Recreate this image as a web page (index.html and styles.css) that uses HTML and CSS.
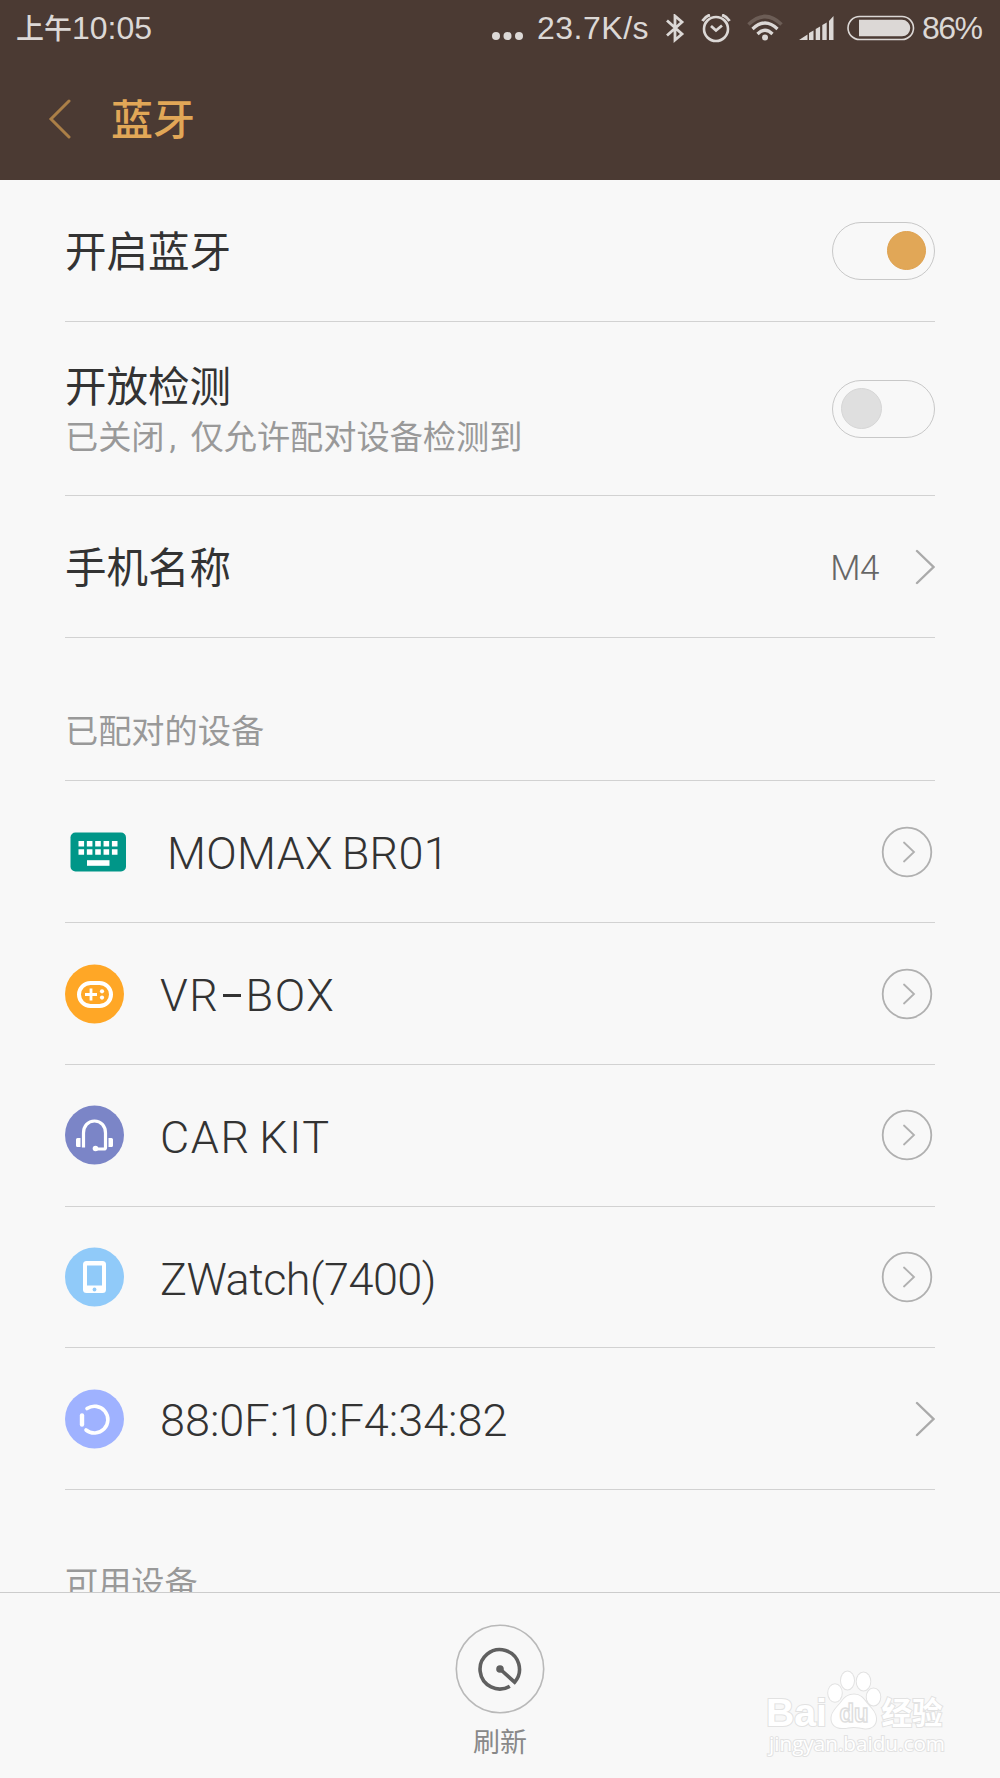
FILE: index.html
```html
<!DOCTYPE html>
<html lang="zh-CN">
<head>
    <meta charset="UTF-8">
    <meta name="viewport" content="width=device-width, initial-scale=1.0">
    <title>蓝牙</title>
    <link rel="stylesheet" href="styles.css">
</head>
<body>
    <div class="screen">
        <header class="header">
            <div class="status-bar">
                <div class="clock"><span class="clock-half">上午</span><span class="clock-time">10:05</span></div>
                <div class="status-icons">
                    <svg class="dots" width="31" height="30" viewBox="0 0 31 30" fill="#dcd8d6">
                        <circle cx="4" cy="22" r="4"/><circle cx="15.500" cy="22" r="4"/><circle cx="27" cy="22" r="4"/>
                    </svg>
                    <span class="speed">23.7K/s</span>
                    <svg class="bt" width="20" height="30" viewBox="0 0 20 30" fill="none" stroke="#dcd8d6" stroke-width="2.8">
                        <path d="M2 6.500 17 20l-7 6V2l7 6L2 21.500"/>
                    </svg>
                    <svg class="alarm" width="30" height="30" viewBox="0 0 30 30" fill="none" stroke="#dcd8d6" stroke-width="2.6">
                        <circle cx="15" cy="15" r="12"/>
                        <path d="M10 12l5 4.500 6-5" stroke-width="2.8"/>
                        <path d="M1.500 7Q4 2.500 9 1M28.500 7Q26 2.500 21 1" stroke-width="3"/>
                    </svg>
                    <svg class="wifi" width="36" height="30" viewBox="0 0 36 30" fill="none" stroke="#dcd8d6" stroke-width="3.2">
                        <path d="M1.500 10.500Q18-5.500 34.500 10.500" stroke="#6c5d56" stroke-width="3.6"/>
                        <path d="M5.500 15Q18 3 30.500 15M10.500 20Q18 12.500 25.500 20"/>
                        <circle cx="18" cy="23.500" r="3" fill="#dcd8d6" stroke="none"/>
                    </svg>
                    <svg class="signal" width="35" height="30" viewBox="0 0 35 30" fill="#dcd8d6">
                        <path d="M0 26 8.500 20.500V26zM10 19l4.500-2.500V26H10zM16.700 15l4.400-2.500V26h-4.400zM23.300 11l4.400-2.500V26h-4.400zM30 7l4.500-5v24H30z"/>
                    </svg>
                    <svg class="battery" width="68" height="30" viewBox="0 0 68 30">
                        <rect x="1" y="2.500" width="65.500" height="23" rx="11.500" fill="none" stroke="#dcd8d6" stroke-width="1.600"/>
                        <path d="M12 5.800h43a8.250 8.250 0 0 1 0 16.500H12z" fill="#dcd8d6"/>
                    </svg>
                    <span class="percent">86%</span>
                </div>
            </div>
            <div class="title-bar">
                <svg class="back" width="24" height="40" viewBox="0 0 24 40" fill="none" stroke="#ab7f47" stroke-width="3" stroke-linecap="round">
                    <path d="M21 2 3 20 21 38"/>
                </svg>
                <h1 class="title">蓝牙</h1>
            </div>
        </header>

        <main class="content">
            <div class="row">
                <div class="label">开启蓝牙</div>
                <div class="switch on"><div class="knob"></div></div>
            </div>
            <div class="row row-tall">
                <div class="texts">
                    <div class="label">开放检测</div>
                    <div class="summary">已关闭<span class="comma">,</span>仅允许配对设备检测到</div>
                </div>
                <div class="switch"><div class="knob"></div></div>
            </div>
            <div class="row">
                <div class="label">手机名称</div>
                <div class="value">M4</div>
                <svg class="chevron" width="20" height="36" viewBox="0 0 20 36"><path d="M2 2 18.500 18 2 34"/></svg>
            </div>

            <div class="section">已配对的设备</div>

            <div class="row device">
                <svg class="icon icon-keyboard" width="59" height="60" viewBox="0 0 59 60">
                    <rect x="5.500" y="10.500" width="55.500" height="39" rx="5" fill="#009688"/>
                    <path d="M13.500 21.800h41M13.500 30h41" stroke="#fff" stroke-width="5.600" stroke-dasharray="5.600 2.750"/>
                    <path d="M22 41h22.500" stroke="#fff" stroke-width="5.600"/>
                </svg>
                <div class="name name-momax">MOMAX BR01</div>
                <svg class="detail" width="52" height="52" viewBox="0 0 52 52"><circle cx="26" cy="26" r="24.300"/><path d="M23 16.500l10 9.500-10 9.500"/></svg>
            </div>
            <div class="row device">
                <svg class="icon" width="59" height="60" viewBox="0 0 59 60">
                    <circle cx="29.500" cy="30" r="29.500" fill="#ffa726"/>
                    <rect x="14" y="19" width="32" height="23" rx="11.500" fill="none" stroke="#fff" stroke-width="4"/>
                    <path d="M20 30.500h12M26 24.500v12" stroke="#fff" stroke-width="2.800"/>
                    <circle cx="37" cy="27.300" r="2.100" fill="#fff"/><circle cx="37" cy="33.600" r="2.100" fill="#fff"/>
                </svg>
                <div class="name name-vr">VR<span class="dash"></span>BOX</div>
                <svg class="detail" width="52" height="52" viewBox="0 0 52 52"><circle cx="26" cy="26" r="24.300"/><path d="M23 16.500l10 9.500-10 9.500"/></svg>
            </div>
            <div class="row device">
                <svg class="icon" width="59" height="60" viewBox="0 0 59 60">
                    <circle cx="29.500" cy="30" r="29.500" fill="#7b85c7"/>
                    <path d="M18.500 42.500V28c0-7 4.500-12 11-12s11 5 11 12v14.500c0 1-.5 1.500-1.500 1.500h-8" fill="none" stroke="#fff" stroke-width="3.200"/>
                    <path d="M12.500 33H15.500v9h-3a1.500 1.500 0 0 1-1.500-1.500v-6a1.500 1.500 0 0 1 1.500-1.500zM43.500 33h3a1.500 1.500 0 0 1 1.500 1.500v6a1.500 1.500 0 0 1-1.500 1.500h-3z" fill="#fff"/>
                    <circle cx="30.500" cy="43.500" r="2.800" fill="#fff"/>
                </svg>
                <div class="name name-car">CAR KIT</div>
                <svg class="detail" width="52" height="52" viewBox="0 0 52 52"><circle cx="26" cy="26" r="24.300"/><path d="M23 16.500l10 9.500-10 9.500"/></svg>
            </div>
            <div class="row device">
                <svg class="icon" width="59" height="60" viewBox="0 0 59 60">
                    <circle cx="29.500" cy="30" r="29.500" fill="#90caf9"/>
                    <rect x="18" y="14" width="23" height="32" rx="3.500" fill="#fff"/>
                    <rect x="22" y="18.500" width="15" height="20" fill="#90caf9"/>
                    <circle cx="29.500" cy="42.500" r="1.900" fill="#90caf9"/>
                </svg>
                <div class="name name-watch">ZWatch(7400)</div>
                <svg class="detail" width="52" height="52" viewBox="0 0 52 52"><circle cx="26" cy="26" r="24.300"/><path d="M23 16.500l10 9.500-10 9.500"/></svg>
            </div>
            <div class="row device">
                <svg class="icon" width="59" height="60" viewBox="0 0 59 60" fill="none" stroke="#fff" stroke-width="3.600" stroke-linecap="round">
                    <circle cx="29.500" cy="30" r="29.500" fill="#9fb2ff" stroke="none"/>
                    <path d="M22 19.500A13.400 13.400 0 1 1 21 41"/>
                    <path d="M17 26.500v9" stroke-width="4.400"/>
                </svg>
                <div class="name name-mac">88:0F:10:F4:34:82</div>
                <svg class="chevron" width="20" height="36" viewBox="0 0 20 36"><path d="M2 2 18.500 18 2 34"/></svg>
            </div>

            <div class="section">可用设备</div>
        </main>

        <footer class="footer">
            <svg class="refresh" width="90" height="90" viewBox="0 0 90 90" fill="none">
                <circle cx="45" cy="45" r="43.700" stroke="#b9b9b9" stroke-width="1.600"/>
                <path d="M54.800 62.200A19.700 19.700 0 1 1 59.600 58.200L45 45" stroke="#606060" stroke-width="3.600"/>
                <circle cx="45" cy="45" r="3.800" fill="#606060"/>
            </svg>
            <div class="refresh-label">刷新</div>
        </footer>

        <svg class="watermark" width="190" height="96" viewBox="0 0 190 96">
            <g class="wm">
                <text x="5" y="61" font-size="39" font-weight="700" textLength="61" lengthAdjust="spacingAndGlyphs">Bai</text>
                <ellipse cx="74" cy="28" rx="6.800" ry="8.800"/>
                <ellipse cx="86.500" cy="15.500" rx="6.500" ry="9"/>
                <ellipse cx="102.500" cy="16.500" rx="6.800" ry="9"/>
                <ellipse cx="112.500" cy="32" rx="6.800" ry="8.500"/>
                <path d="M93 29.500c7 0 10 5 13 9 4 5 8.500 8 9 14.500.5 7-4.500 11-11 10.500-4-.5-7-1.500-11.500-1.500S85 63.500 81 63c-6.500 0-11-4-10.500-10.500C71 46.500 76 42.500 80 37.500c3-4 6-8 13-8z"/>
            </g>
            <text class="wm-du" x="78.500" y="57" font-size="26" font-weight="700" textLength="29" lengthAdjust="spacingAndGlyphs">du</text>
            <text class="wm wm-cn" x="120.500" y="59" font-size="30.500" font-weight="700" textLength="61">经验</text>
            <text class="wm wm-url" x="8" y="86" font-size="20.500" textLength="176" lengthAdjust="spacingAndGlyphs">jingyan.baidu.com</text>
        </svg>
    </div>
</body>
</html>
```
FILE: styles.css
```css
* {
    box-sizing: border-box;
}

body {
    margin: 0;
    background-color: #f8f8f8;
    font-family: Roboto, "Noto Sans CJK SC", sans-serif;
    color: #333;
}

svg {
    display: block;
    flex-shrink: 0;
}

.screen {
    position: relative;
    width: 1000px;
    height: 1778px;
    display: flex;
    flex-direction: column;
    overflow: hidden;
}

/* header */
.header {
    height: 180.4px;
    flex-shrink: 0;
    background-color: #4b3a33;
}

.status-bar {
    height: 57px;
    padding: 0 17px 0 16px;
    display: flex;
    justify-content: space-between;
    align-items: center;
    color: #dcd8d6;
    font-family: "Liberation Sans", "Noto Sans CJK SC", sans-serif;
    font-size: 32px;
    line-height: 57px;
    white-space: nowrap;
}

.clock {
    display: flex;
}

.clock-half {
    width: 56px;
    padding-top: 1px;
    font-size: 28px;
    font-weight: 500;
}

.status-icons {
    display: flex;
    align-items: center;
}

.speed {
    width: 111px;
    margin-left: 14px;
    letter-spacing: 0.5px;
}

.bt {
    margin-left: 17px;
}

.alarm {
    margin-left: 16px;
}

.wifi {
    margin-left: 16px;
}

.signal {
    margin-left: 16px;
}

.battery {
    margin-left: 13px;
}

.percent {
    width: 61px;
    margin-left: 7px;
    letter-spacing: -1.5px;
}

.title-bar {
    height: 123px;
    padding-left: 48px;
    display: flex;
    align-items: center;
}

.title {
    margin: 0 0 0 39px;
    padding-top: 5px;
    font-size: 42px;
    font-weight: 500;
    line-height: 60px;
    color: #e1a757;
}

/* list */
.content {
    flex: 1;
    min-height: 0;
    padding: 0 65px;
    overflow: hidden;
}

.row {
    height: 141.75px;
    display: flex;
    align-items: center;
    border-bottom: 1px solid #d2d2d2;
}

.row-tall {
    height: 174px;
}

.label {
    flex: 1;
    padding-top: 5px;
    font-size: 41.5px;
    font-weight: 400;
    line-height: 54px;
}

.summary {
    font-size: 33.2px;
    font-weight: 400;
    line-height: 46px;
    color: #999;
}

.texts {
    flex: 1;
}

.comma {
    display: inline-block;
    width: 26px;
    padding-left: 5px;
}

.value {
    margin-right: 36px;
    padding-top: 3px;
    font-size: 35px;
    font-weight: 300;
    letter-spacing: -0.5px;
    color: #666;
}

.chevron {
    fill: none;
    stroke: #aaa;
    stroke-width: 2.4;
    stroke-linecap: round;
}

.switch {
    width: 103px;
    height: 58px;
    padding: 8px;
    display: flex;
    align-items: center;
    border: 1.4px solid #c8c8c8;
    border-radius: 29px;
}

.knob {
    width: 41px;
    height: 41px;
    border: 1px solid #d6d6d6;
    border-radius: 50%;
    background-color: #dfdfdf;
}

.switch.on {
    justify-content: flex-end;
}

.on .knob {
    width: 39px;
    height: 39px;
    border-color: #dfa250;
    background-color: #e1a757;
}

.section {
    height: 143.5px;
    padding-top: 71px;
    border-bottom: 1px solid #d2d2d2;
    font-size: 33.2px;
    font-weight: 400;
    line-height: 46px;
    color: #999;
}

.icon {
    overflow: visible;
}

.name {
    flex: 1;
    margin-left: 36px;
    padding-top: 4px;
    font-size: 45px;
    font-weight: 300;
    white-space: nowrap;
}

.name-momax {
    margin-left: 43px;
    letter-spacing: 0.3px;
    word-spacing: -2.5px;
}

.name-vr {
    letter-spacing: 1.6px;
}

.name-car {
    letter-spacing: 1.6px;
    word-spacing: -4px;
}

.name-watch {
    letter-spacing: -0.5px;
}

.dash {
    display: inline-block;
    width: 18px;
    height: 3px;
    margin: 0 5px 14px 3px;
    background-color: #333;
}

.detail {
    margin-right: 2px;
    fill: none;
    stroke: #b0b0b0;
    stroke-width: 1.8;
    stroke-linecap: round;
}

/* bottom bar */
.footer {
    height: 186px;
    flex-shrink: 0;
    padding-top: 31px;
    display: flex;
    flex-direction: column;
    align-items: center;
    border-top: 1px solid #ccc;
}

.refresh-label {
    margin-top: 10px;
    font-size: 27px;
    line-height: 38px;
    font-weight: 400;
    color: #888;
}

.watermark {
    position: absolute;
    left: 761px;
    top: 1665px;
    font-family: "Liberation Sans", sans-serif;
}

.wm {
    fill: #fff;
    stroke: #e2e2e2;
    stroke-width: 2;
    paint-order: stroke;
}

.wm-du {
    fill: #fff;
    stroke: #dedede;
    stroke-width: 1.6;
}

.wm-cn {
    font-family: "Noto Sans CJK SC", sans-serif;
}

.wm-url {
    font-family: "Open Sans", sans-serif;
}
```
